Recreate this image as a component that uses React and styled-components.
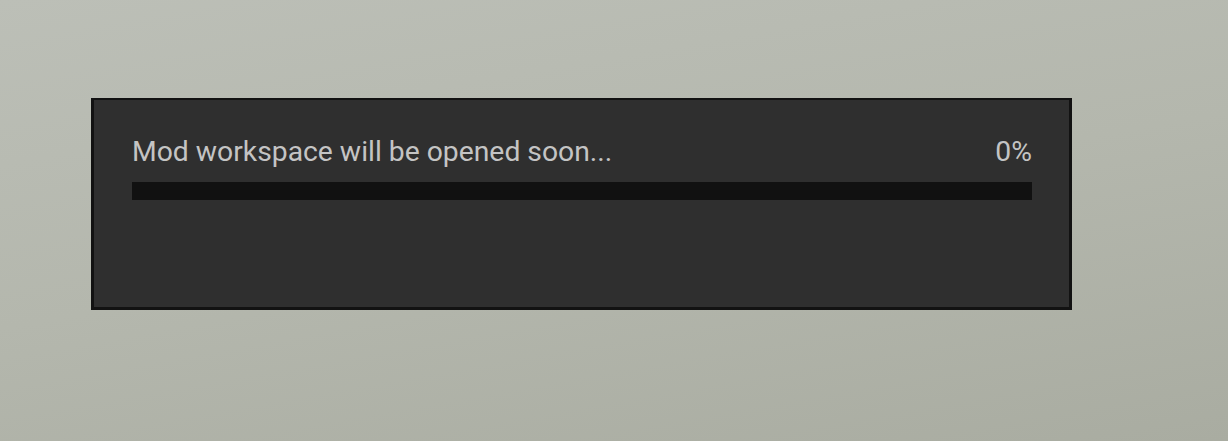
import React from 'react';
import styled, { createGlobalStyle } from 'styled-components';

const GlobalStyle = createGlobalStyle`
  html, body {
    margin: 0;
    padding: 0;
  }
  body {
    font-family: Roboto, "Liberation Sans", sans-serif;
  }
`;

const Page = styled.div`
  width: 1228px;
  height: 441px;
  box-sizing: border-box;
  padding: 98px 0 0 91px;
  background: linear-gradient(170deg, #bcbfb7 0%, #b4b7ad 50%, #a9aca1 100%);
  overflow: hidden;
`;

const Panel = styled.div`
  width: 981px;
  height: 212px;
  box-sizing: border-box;
  border: 2px solid #121212;
  border-width: 2px 3px 3px 3px;
  background: #2f2f2f;
  padding: 38px 37px 0 38px;
`;

const Header = styled.div`
  display: flex;
  justify-content: space-between;
  align-items: baseline;
  font-size: 28.3px;
  line-height: 28px;
  color: #c4c4c4;
`;

const Label = styled.span``;

const Percent = styled.span``;

const Track = styled.div`
  margin-top: 16px;
  height: 18px;
  background: #111111;
`;

const Fill = styled.div`
  height: 100%;
  background: #8aa83a;
`;

export default function App() {
  const progress = 0;
  return (
    <>
      <GlobalStyle />
      <Page>
        <Panel>
          <Header>
            <Label>Mod workspace will be opened soon...</Label>
            <Percent>{progress}%</Percent>
          </Header>
          <Track>
            <Fill style={{ width: `${progress}%` }} />
          </Track>
        </Panel>
      </Page>
    </>
  );
}
